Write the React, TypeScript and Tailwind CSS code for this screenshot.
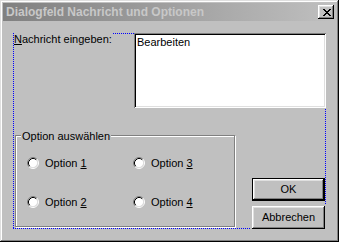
import React from 'react';

// Windows-2000 style dialog: "Dialogfeld Nachricht und Optionen"

const raised =
  'shadow-[inset_-1px_-1px_0_#000,inset_1px_1px_0_#fff,inset_-2px_-2px_0_#808080,inset_2px_2px_0_#dfdfdf]';

function CloseGlyph() {
  // 8x7 pixel X
  const px = [
    [0, 0], [1, 0], [6, 0], [7, 0],
    [1, 1], [2, 1], [5, 1], [6, 1],
    [2, 2], [3, 2], [4, 2], [5, 2],
    [3, 3], [4, 3],
    [2, 4], [3, 4], [4, 4], [5, 4],
    [1, 5], [2, 5], [5, 5], [6, 5],
    [0, 6], [1, 6], [6, 6], [7, 6],
  ];
  return (
    <svg width="8" height="7" viewBox="0 0 8 7" shapeRendering="crispEdges">
      {px.map(([x, y], i) => (
        <rect key={i} x={x} y={y} width="1" height="1" fill="#000" />
      ))}
    </svg>
  );
}

function Radio() {
  return (
    <svg width="12" height="12" viewBox="0 0 12 12" className="shrink-0">
      <circle cx="6" cy="6" r="4.5" fill="#fff" />
      <path d="M2.11 9.89 A5.5 5.5 0 0 1 9.89 2.11" fill="none" stroke="#808080" strokeWidth="1" />
      <path d="M9.89 2.11 A5.5 5.5 0 0 1 2.11 9.89" fill="none" stroke="#fff" strokeWidth="1" />
      <path d="M2.82 9.18 A4.5 4.5 0 0 1 9.18 2.82" fill="none" stroke="#000" strokeWidth="1" />
      <path d="M9.18 2.82 A4.5 4.5 0 0 1 2.82 9.18" fill="none" stroke="#dfdfdf" strokeWidth="1" />
    </svg>
  );
}

function Option({ n }: { n: string }) {
  return (
    <div className="flex h-[12px] items-center gap-[6px]">
      <Radio />
      <span className="leading-[13px] whitespace-nowrap">
        Option <u className="underline-offset-1">{n}</u>
      </span>
    </div>
  );
}

export default function App() {
  return (
    <div
      className={`w-[339px] h-[242px] bg-[#c0c0c0] p-[3px] flex flex-col text-[11px] text-black font-['Liberation_Sans',Arial,sans-serif] shadow-[inset_-1px_-1px_0_#000,inset_1px_1px_0_#dfdfdf,inset_-2px_-2px_0_#808080,inset_2px_2px_0_#fff]`}
    >
      {/* title bar (inactive) */}
      <div className="h-[18px] flex items-center justify-between pl-[3px] pr-[2px] bg-gradient-to-r from-[#808080] to-[#c0c0c0]">
        <span className="text-[12px] font-bold leading-[14px] text-[#c8c8c8] whitespace-nowrap">
          Dialogfeld Nachricht und Optionen
        </span>
        <div className={`w-[16px] h-[14px] bg-[#c0c0c0] flex items-center justify-center pl-px ${raised}`}>
          <CloseGlyph />
        </div>
      </div>

      {/* dotted layout frame (1px dots, drawn as backgrounds) */}
      <div
        className="mt-[12px] ml-[10px] w-[313px] h-[196px] p-px flex flex-col bg-[linear-gradient(90deg,#0000ff_50%,transparent_50%),linear-gradient(90deg,#0000ff_50%,transparent_50%),linear-gradient(180deg,#0000ff_50%,transparent_50%),linear-gradient(180deg,#0000ff_50%,transparent_50%)] [background-size:2px_1px,2px_1px,1px_2px,1px_2px] [background-position:0_0,0_100%,0_0,100%_0] [background-repeat:repeat-x,repeat-x,repeat-y,repeat-y]"
      >
        <div className="flex items-start">
          <span className="-mt-px bg-[#c0c0c0] leading-[13px] whitespace-nowrap">
            <u className="underline-offset-1">N</u>achricht eingeben:
          </span>
          <div
            className={`ml-auto -mt-px -mr-px w-[192px] h-[75px] bg-white pl-[3px] pt-[3px] leading-[13px] shadow-[inset_1px_1px_0_#808080,inset_-1px_-1px_0_#fff,inset_2px_2px_0_#000,inset_-2px_-2px_0_#dfdfdf]`}
          >
            Bearbeiten
          </div>
        </div>

        <div className="flex flex-1">
          {/* group box */}
          <div className="self-start mt-[27px] ml-px w-[220px] h-[92px] border border-[#808080] shadow-[1px_1px_0_#fff,inset_1px_1px_0_#fff]">
            <div className="-mt-[6px] ml-[5px] w-fit px-px bg-[#c0c0c0] leading-[13px] whitespace-nowrap">
              Option auswählen
            </div>
            <div className="mt-[14px] pl-[11px] grid grid-cols-[106px_auto] gap-y-[27px]">
              <Option n="1" />
              <Option n="3" />
              <Option n="2" />
              <Option n="4" />
            </div>
          </div>

          {/* buttons */}
          <div className="ml-auto self-end -mr-px -mb-px flex flex-col items-end">
            <div className="mr-px w-[73px] h-[23px] border border-black">
              <button className={`w-full h-full bg-[#c0c0c0] leading-[13px] ${raised}`}>OK</button>
            </div>
            <div className="mt-[3px] bg-[#c0c0c0] pt-[2px] pl-px w-[75px]">
              <button className={`w-[73px] h-[23px] bg-[#c0c0c0] leading-[13px] ${raised}`}>Abbrechen</button>
            </div>
          </div>
        </div>
      </div>
    </div>
  );
}
